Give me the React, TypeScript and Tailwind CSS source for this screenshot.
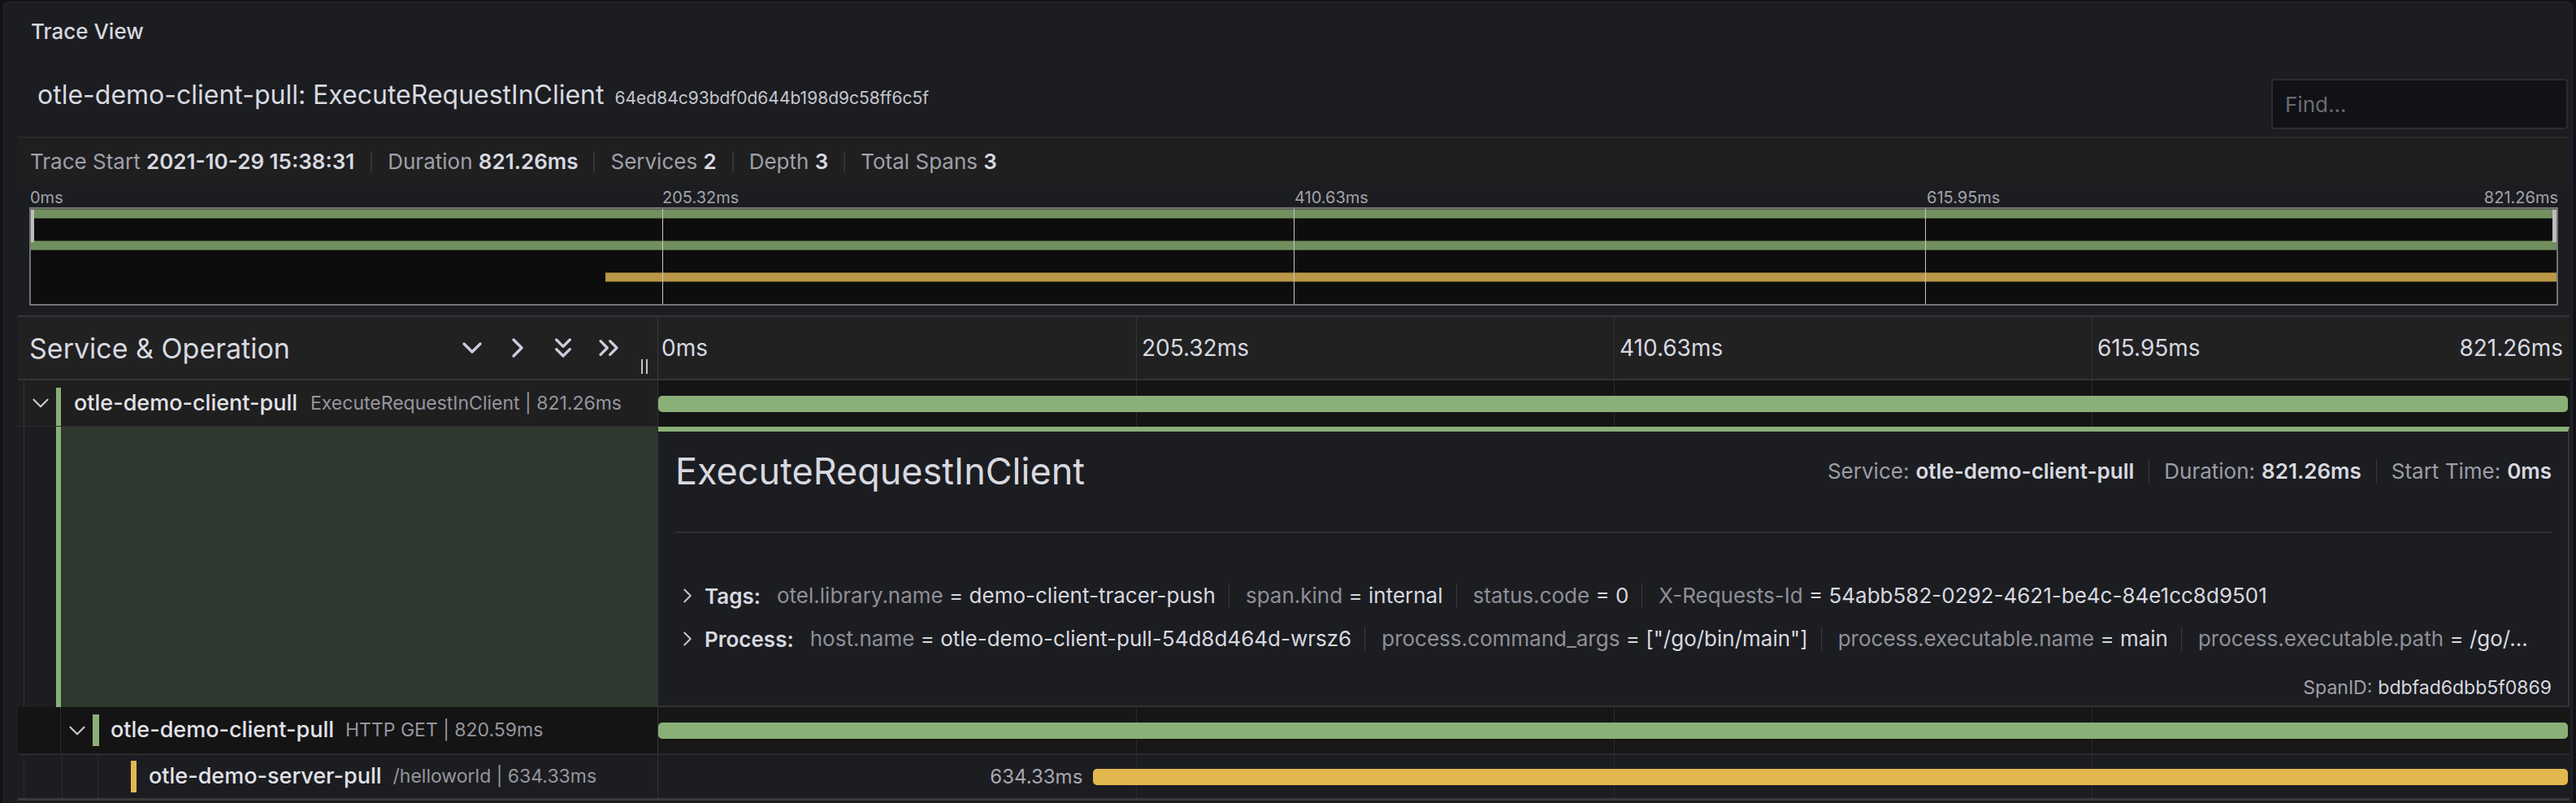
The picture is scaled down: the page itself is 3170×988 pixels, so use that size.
import React from "react";
import { ChevronDown, ChevronRight, ChevronsDown, ChevronsRight } from "lucide-react";

function RowGrid() {
  return (
    <div className="absolute inset-0 grid grid-cols-4">
      <div />
      <div className="border-l border-[#2a2a2c]" />
      <div className="border-l border-[#2a2a2c]" />
      <div className="border-l border-[#2a2a2c]" />
    </div>
  );
}

function StatSep() {
  return <div className="w-[2px] h-[26px] bg-[#333438]" />;
}

function KV({ k, v, first }: { k: string; v: string; first?: boolean }) {
  return (
    <div
      className={
        first
          ? "shrink-0 pl-[20px] pr-[16px] whitespace-nowrap leading-[30px]"
          : "shrink-0 pl-[20px] pr-[16px] border-l border-[#3a3b40] whitespace-nowrap leading-[30px]"
      }
    >
      <span className="text-[#8f8f98]">{k}</span>
      <span className="text-[#d8d9e0]"> = {v}</span>
    </div>
  );
}

function MetaSep() {
  return <div className="mx-[18px] w-[1px] h-[30px] bg-[#3a3b40]" />;
}

export default function App() {
  return (
    <div className="w-[3170px] h-[988px] overflow-hidden bg-[#111217] pl-[4px] pt-[2px] font-['Inter','Noto_Sans',sans-serif] text-[#ccccdc]">
      <div className="w-[3162px] h-[1000px] rounded-t-[6px] border border-[#26272c] bg-[#1c1d21] pl-[17px]">
        <div className="w-[3140px]">
          {/* Panel header */}
          <div className="h-[70px] flex items-center pl-[16px] text-[26px] font-medium text-[#d5d6de]">
            Trace View
          </div>

          {/* Title row */}
          <div className="h-[95px] flex items-start pt-[24px]">
            <div className="pl-[24px] flex items-baseline h-[40px] leading-[40px] whitespace-nowrap">
              <span className="text-[32px] text-[#d8d9e0]">otle-demo-client-pull: ExecuteRequestInClient</span>
              <span className="ml-[13px] text-[21px] text-[#c6c6ce]">64ed84c93bdf0d644b198d9c58ff6c5f</span>
            </div>
            <div className="ml-auto mr-[2px] w-[365px] h-[62px] rounded-[4px] border-2 border-[#2b2c31] bg-[#111217] flex items-center pl-[15px] text-[26px] text-[#6b6c73]">
              Find...
            </div>
          </div>

          {/* Stats bar */}
          <div className="h-[59px] bg-[#1f1f20] border-t-2 border-[#29292b] flex items-center text-[26px] whitespace-nowrap">
            <div className="pl-[15px] pr-[20px]">
              <span className="text-[#a0a0a9]">Trace Start </span>
              <span className="font-semibold text-[#d8d9e0]">2021-10-29 15:38:31</span>
            </div>
            <StatSep />
            <div className="px-[19px]">
              <span className="text-[#a0a0a9]">Duration </span>
              <span className="font-semibold text-[#d8d9e0]">821.26ms</span>
            </div>
            <StatSep />
            <div className="px-[19px]">
              <span className="text-[#a0a0a9]">Services </span>
              <span className="font-semibold text-[#d8d9e0]">2</span>
            </div>
            <StatSep />
            <div className="px-[19px]">
              <span className="text-[#a0a0a9]">Depth </span>
              <span className="font-semibold text-[#d8d9e0]">3</span>
            </div>
            <StatSep />
            <div className="px-[19px]">
              <span className="text-[#a0a0a9]">Total Spans </span>
              <span className="font-semibold text-[#d8d9e0]">3</span>
            </div>
          </div>

          {/* Minimap */}
          <div className="mx-[14px] mt-[5px]">
            <div className="grid grid-cols-4 h-[22px] text-[20px] leading-[22px] text-[#a3a3aa]">
              <div className="pl-[1px]">0ms</div>
              <div className="pl-[1px]">205.32ms</div>
              <div className="pl-[1px]">410.63ms</div>
              <div className="pl-[1px] flex justify-between">
                <span>615.95ms</span>
                <span>821.26ms</span>
              </div>
            </div>
            <div className="relative mt-[1px] h-[121px] border-2 border-[#747474] bg-[#0d0d0d] overflow-hidden">
              <div className="h-[39px]">
                <div className="h-[12px] w-full bg-[#728f60] border-y border-[#4c6140]" />
              </div>
              <div className="h-[39px]">
                <div className="h-[12px] w-full bg-[#728f60] border-y border-[#4c6140]" />
              </div>
              <div className="h-[39px] flex">
                <div className="w-[22.76%]" />
                <div className="h-[12px] flex-1 bg-[#b89746] border-y border-[#6e5a2a]" />
              </div>
              <div className="absolute inset-0 grid grid-cols-4">
                <div />
                <div className="border-l border-[#c8c8c8]" />
                <div className="border-l border-[#c8c8c8]" />
                <div className="border-l border-[#c8c8c8]" />
              </div>
              <div className="absolute left-0 top-[1px] w-[4px] h-[40px] bg-[#bdbdbd]" />
              <div className="absolute right-0 top-[1px] w-[5px] h-[40px] bg-[#bdbdbd]" />
            </div>
          </div>

          {/* Timeline */}
          <div className="mt-[12px] border-t-2 border-[#353538]">
            {/* header */}
            <div className="h-[78px] flex bg-[#212122] border-b-2 border-[#353538]">
              <div className="w-[788px] shrink-0 border-r border-[#353538] flex items-center pl-[14px] pr-[12px]">
                <span className="text-[34px] text-[#d8d9e0] whitespace-nowrap">Service &amp; Operation</span>
                <div className="flex-1" />
                <div className="flex items-center gap-[16px] text-[#ccccdc]">
                  <ChevronDown size={40} strokeWidth={2} />
                  <ChevronRight size={40} strokeWidth={2} />
                  <ChevronsDown size={40} strokeWidth={2} />
                  <ChevronsRight size={40} strokeWidth={2} />
                </div>
                <div className="self-end mb-[6px] ml-[20px] flex gap-[4px]">
                  <div className="w-[2px] h-[18px] bg-[#c0c0c8]" />
                  <div className="w-[2px] h-[18px] bg-[#c0c0c8]" />
                </div>
              </div>
              <div className="flex-1 min-w-0 grid grid-cols-4 text-[28px] text-[#d8d9e0] items-center">
                <div className="pl-[4px] h-full flex items-center">0ms</div>
                <div className="pl-[6px] h-full flex items-center border-l border-[#333336]">205.32ms</div>
                <div className="pl-[6px] h-full flex items-center border-l border-[#333336]">410.63ms</div>
                <div className="pl-[6px] pr-[8px] h-full flex items-center justify-between border-l border-[#333336]">
                  <span>615.95ms</span>
                  <span>821.26ms</span>
                </div>
              </div>
            </div>

            {/* Row 1 */}
            <div className="h-[57px] flex">
              <div className="w-[788px] shrink-0 border-r border-[#353538] bg-[#1f1f20] border-b border-b-[#2c2c2e] flex items-center whitespace-nowrap">
                <div className="w-[8px] self-stretch border-r border-[#333336]" />
                <div className="w-[39px] flex justify-center text-[#c8c8d0]">
                  <ChevronDown size={34} strokeWidth={1.5} />
                </div>
                <div className="w-[6px] self-stretch mt-[9px] bg-[#8ab077]" />
                <span className="ml-[16px] text-[27px] font-medium text-[#e2e2e8]">otle-demo-client-pull</span>
                <span className="ml-[16px] text-[23px] text-[#96969e]">ExecuteRequestInClient | 821.26ms</span>
              </div>
              <div className="flex-1 min-w-0 relative bg-[#141414] flex items-center">
                <RowGrid />
                <div className="relative h-[20px] flex-1 mr-[2px] rounded-[5px] bg-[#8ab077]" />
              </div>
            </div>

            {/* Detail */}
            <div className="h-[345px] flex">
              <div className="w-[788px] shrink-0 flex border-r border-[#353538]">
                <div className="w-[8px] border-r border-[#333336]" />
                <div className="w-[39px]" />
                <div className="w-[6px] bg-[#8ab077]" />
                <div className="flex-1 bg-[#2e382f]" />
              </div>
              <div className="flex-1 min-w-0 border-t-[6px] border-t-[#8ab077] border-r-2 border-r-[#333336] border-b-2 border-b-[#333336] bg-[#1c1d21] pl-[21px] pr-[20px] pt-[21px]">
                <div className="h-[56px] flex items-center whitespace-nowrap">
                  <span className="text-[45px] text-[#d8d9e0]">ExecuteRequestInClient</span>
                  <div className="ml-auto flex items-center text-[26px] leading-[30px]">
                    <span className="text-[#9d9da6]">Service:</span>
                    <span className="ml-[8px] font-semibold text-[#d8d9e0]">otle-demo-client-pull</span>
                    <MetaSep />
                    <span className="text-[#9d9da6]">Duration:</span>
                    <span className="ml-[8px] font-semibold text-[#d8d9e0]">821.26ms</span>
                    <MetaSep />
                    <span className="text-[#9d9da6]">Start Time:</span>
                    <span className="ml-[8px] font-semibold text-[#d8d9e0]">0ms</span>
                  </div>
                </div>
                <div className="mt-[46px] h-[2px] bg-[#2f3035]" />
                <div className="mt-[57px] h-[40px] flex items-center text-[26px] whitespace-nowrap">
                  <ChevronRight size={30} strokeWidth={1.5} className="shrink-0 text-[#c8c8d0]" />
                  <span className="ml-[6px] font-semibold text-[#d8d9e0]">Tags:</span>
                  <KV first k="otel.library.name" v="demo-client-tracer-push" />
                  <KV k="span.kind" v="internal" />
                  <KV k="status.code" v="0" />
                  <KV k="X-Requests-Id" v="54abb582-0292-4621-be4c-84e1cc8d9501" />
                </div>
                <div className="mt-[13px] h-[40px] flex items-center text-[26px] whitespace-nowrap">
                  <ChevronRight size={30} strokeWidth={1.5} className="shrink-0 text-[#c8c8d0]" />
                  <span className="ml-[6px] font-semibold text-[#d8d9e0] shrink-0">Process:</span>
                  <KV first k="host.name" v="otle-demo-client-pull-54d8d464d-wrsz6" />
                  <KV k="process.command_args" v={'["/go/bin/main"]'} />
                  <KV k="process.executable.name" v="main" />
                  <KV k="process.executable.path" v={"/go/\u2026"} />
                </div>
                <div className="mt-[25px] h-[30px] flex justify-end items-center text-[23px] whitespace-nowrap">
                  <span className="text-[#a0a0a9]">SpanID:</span>
                  <span className="ml-[7px] text-[#d8d9e0]">bdbfad6dbb5f0869</span>
                </div>
              </div>
            </div>

            {/* Row 2 */}
            <div className="h-[59px] flex border-b-2 border-[#2c2c2e]">
              <div className="w-[788px] shrink-0 border-r border-[#353538] bg-[#141414] flex items-center whitespace-nowrap">
                <div className="w-[8px] self-stretch" />
                <div className="w-[45px] self-stretch border-r border-[#2a2a2c]" />
                <div className="w-[39px] flex justify-center text-[#c8c8d0]">
                  <ChevronDown size={34} strokeWidth={1.5} />
                </div>
                <div className="w-[8px] h-[39px] bg-[#8ab077]" />
                <span className="ml-[14px] text-[27px] font-medium text-[#e2e2e8]">otle-demo-client-pull</span>
                <span className="ml-[14px] text-[23px] text-[#96969e]">HTTP GET | 820.59ms</span>
              </div>
              <div className="flex-1 min-w-0 relative bg-[#171717] flex items-center">
                <RowGrid />
                <div className="relative h-[20px] flex-1 mr-[2px] rounded-[5px] bg-[#8ab077]" />
              </div>
            </div>

            {/* Row 3 */}
            <div className="h-[56px] flex border-b-[3px] border-[#3a3a3c]">
              <div className="w-[788px] shrink-0 border-r border-[#353538] flex items-center whitespace-nowrap">
                <div className="w-[8px] self-stretch border-r border-[#2a2a2c]" />
                <div className="w-[47px] self-stretch border-r border-[#2a2a2c]" />
                <div className="w-[44px] self-stretch border-r border-[#2a2a2c]" />
                <div className="w-[40px]" />
                <div className="w-[7px] h-[39px] bg-[#e2b84f]" />
                <span className="ml-[15px] text-[27px] font-medium text-[#e2e2e8]">otle-demo-server-pull</span>
                <span className="ml-[14px] text-[23px] text-[#96969e]">/helloworld | 634.33ms</span>
              </div>
              <div className="flex-1 min-w-0 relative flex items-center">
                <RowGrid />
                <div className="relative w-[22.76%] flex justify-end pr-[13px] text-[24px] text-[#a8a8b0]">634.33ms</div>
                <div className="relative h-[20px] flex-1 mr-[2px] rounded-[5px] bg-[#e2b84f]" />
              </div>
            </div>
          </div>
        </div>
      </div>
    </div>
  );
}
